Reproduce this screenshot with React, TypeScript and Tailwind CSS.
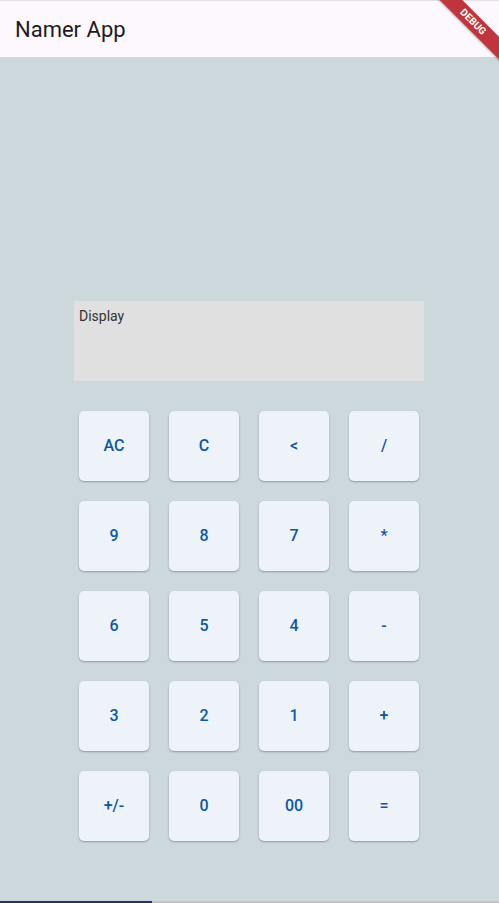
import React from 'react';

const keys = ['AC', 'C', '<', '/', '9', '8', '7', '*', '6', '5', '4', '-', '3', '2', '1', '+', '+/-', '0', '00', '='];

function App() {
  return (
    <div className="relative h-[903px] w-[499px] overflow-hidden bg-[#cdd8dd] font-['Roboto',sans-serif]">
      {/* App bar */}
      <div className="h-px bg-[#e3e3e6]" />
      <header className="flex h-[56px] items-center bg-[#fdf8fd] pl-[15px]">
        <h1 className="text-[22px] text-[#1d1b20]">Namer App</h1>
      </header>

      {/* Debug banner */}
      <div className="absolute right-[-34px] top-[14px] w-[120px] rotate-45 bg-[#c0353b] py-[1px] text-center text-[10px] font-bold leading-[14px] text-white shadow-[0_1px_2px_rgba(0,0,0,0.3)]">
        DEBUG
      </div>

      {/* Body */}
      <main className="flex h-[844px] flex-col pt-[244px]">
        <div className="ml-[74px] h-[80px] w-[350px] bg-[#e0e0e0] px-[5px] pt-[5px] text-[14px] text-[#333333]">
          Display
        </div>
        <div className="mt-[30px] ml-[79px] grid grid-cols-[repeat(4,70px)] gap-[20px]">
          {keys.map((k) => (
            <button
              key={k}
              className="flex h-[70px] w-[70px] items-center justify-center rounded-[5px] bg-[#eef3fa] text-[16px] font-medium text-[#0b57a6] shadow-[0_1px_2px_rgba(0,0,0,0.3)]"
            >
              {k}
            </button>
          ))}
        </div>
      </main>

      {/* Bottom strip */}
      <div className="flex h-[2px]">
        <div className="w-[152px] bg-[#2b2e6a]" />
        <div className="flex-1 bg-[#c4c4c4]" />
      </div>
    </div>
  );
}

export default App;
